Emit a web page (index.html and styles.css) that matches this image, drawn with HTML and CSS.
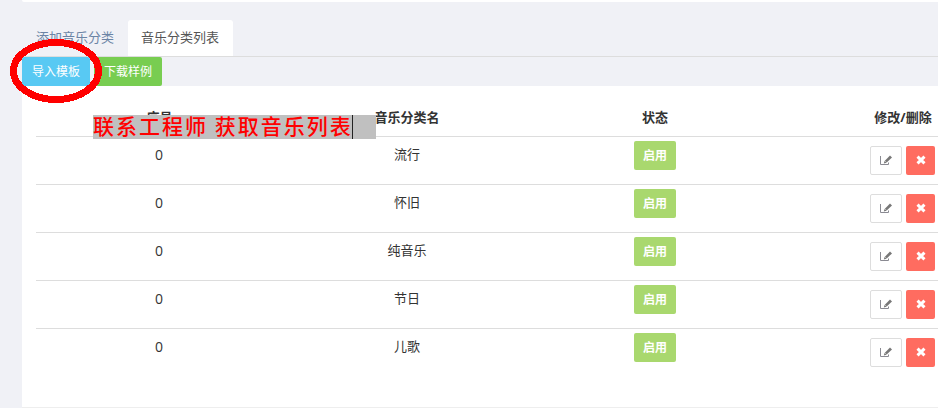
FILE: index.html
```
<!DOCTYPE html>
<html lang="zh-CN">
  <head>
    <meta charset="UTF-8" />
    <title>音乐分类列表</title>
    <link rel="stylesheet" href="styles.css">
  </head>
  <body>
    <svg class="icon-defs" width="0" height="0">
      <symbol id="icon-edit" viewBox="0 0 14 12">
        <path d="M1.5 1v8.5h8V7.5" fill="none" stroke="#8a8a92" />
        <path d="M4.8 8.6l.8-2.6L11 .6 13 2.4 7.4 7.8z" fill="#777" />
        <path d="M6.2 6.2l1.3 1.2" stroke="#fff" stroke-width=".6" />
      </symbol>
      <symbol id="icon-remove" viewBox="0 0 10 10">
        <path d="M1.5 1.7l7 6.6M8.5 1.7l-7 6.6" stroke="#fff" stroke-width="3" />
      </symbol>
    </svg>

    <div class="page">
      <div class="top-panel"></div>
      <ul class="tabs">
        <li class="tab">添加音乐分类</li>
        <li class="tab active">音乐分类列表</li>
      </ul>
      <div class="toolbar">
        <button class="btn btn-info">导入模板</button>
        <button class="btn btn-success">下载样例</button>
      </div>
      <div class="panel">
        <table class="table">
          <thead>
            <tr><th class="col-index">序号</th><th>音乐分类名</th><th>状态</th><th>修改/删除</th></tr>
          </thead>
          <tbody>
            <tr>
              <td class="index">0</td>
              <td>流行</td>
              <td class="status"><button class="btn btn-status">启用</button></td>
              <td class="actions"><div class="action-group"><button class="btn btn-edit"><svg width="14" height="12"><use href="#icon-edit" /></svg></button><button class="btn btn-remove"><svg width="10" height="10"><use href="#icon-remove" /></svg></button></div></td>
            </tr>
            <tr>
              <td class="index">0</td>
              <td>怀旧</td>
              <td class="status"><button class="btn btn-status">启用</button></td>
              <td class="actions"><div class="action-group"><button class="btn btn-edit"><svg width="14" height="12"><use href="#icon-edit" /></svg></button><button class="btn btn-remove"><svg width="10" height="10"><use href="#icon-remove" /></svg></button></div></td>
            </tr>
            <tr>
              <td class="index">0</td>
              <td>纯音乐</td>
              <td class="status"><button class="btn btn-status">启用</button></td>
              <td class="actions"><div class="action-group"><button class="btn btn-edit"><svg width="14" height="12"><use href="#icon-edit" /></svg></button><button class="btn btn-remove"><svg width="10" height="10"><use href="#icon-remove" /></svg></button></div></td>
            </tr>
            <tr>
              <td class="index">0</td>
              <td>节日</td>
              <td class="status"><button class="btn btn-status">启用</button></td>
              <td class="actions"><div class="action-group"><button class="btn btn-edit"><svg width="14" height="12"><use href="#icon-edit" /></svg></button><button class="btn btn-remove"><svg width="10" height="10"><use href="#icon-remove" /></svg></button></div></td>
            </tr>
            <tr>
              <td class="index">0</td>
              <td>儿歌</td>
              <td class="status"><button class="btn btn-status">启用</button></td>
              <td class="actions"><div class="action-group"><button class="btn btn-edit"><svg width="14" height="12"><use href="#icon-edit" /></svg></button><button class="btn btn-remove"><svg width="10" height="10"><use href="#icon-remove" /></svg></button></div></td>
            </tr>
          </tbody>
        </table>
      </div>
    </div>

    <!-- Notes on top of the page -->
    <svg class="circle-mark" width="94" height="66" viewBox="0 0 94 66" shape-rendering="crispEdges">
      <ellipse cx="47" cy="33" rx="42.5" ry="28.5" fill="none" stroke="#f00" stroke-width="7" />
    </svg>
    <div class="note"><span class="note-text">联系工程师 获取音乐列表</span></div>
  </body>
</html>
```
FILE: styles.css
```
* {
  box-sizing: border-box;
}

body {
  margin: 0;
  height: 408px;
  overflow: hidden;
  background: #f0f1f6;
  color: #333;
  font-family: "Open Sans", "Noto Sans CJK SC", sans-serif;
  font-size: 13px;
  line-height: 18px;
}

.icon-defs {
  position: absolute;
}

.page {
  width: 100%;
  padding-left: 22px;
  overflow: hidden;
}

.top-panel {
  height: 2px;
  background: #fff;
  border-radius: 0 0 0 2px;
}

/* Tabs */
.tabs {
  display: flex;
  height: 37px;
  margin: 18px 0 0;
  padding: 0;
  list-style: none;
  border-bottom: 1px solid #ddd;
}

.tab {
  width: 106px;
  padding: 8px 0 10px 14px;
  color: #6b84a5;
  white-space: nowrap;
}

.tab.active {
  width: 105px;
  padding-left: 13px;
  background: #fff;
  border-radius: 3px 3px 0 0;
  color: #555;
}

/* Buttons */
.toolbar {
  display: flex;
  gap: 4px;
  height: 29px;
}

.btn {
  display: flex;
  align-items: center;
  justify-content: center;
  height: 29px;
  padding: 0;
  border: 0;
  border-radius: 2px;
  color: #fff;
  font: 12px/18px "Open Sans", "Noto Sans CJK SC", sans-serif;
}

.btn-info {
  width: 68px;
  background: #58c9f3;
}

.btn-success {
  width: 68px;
  background: #78cd51;
}

.btn-status {
  width: 42px;
  margin: 0 auto;
  background: #a9d86e;
  font-weight: bold;
}

.btn-edit {
  width: 32px;
  border: 1px solid #ddd;
  background: #fff;
}

.btn-remove {
  width: 29px;
  padding-bottom: 1px;
  background: #ff6c60;
}

/* Table */
.panel {
  height: 322px;
  padding: 15px 0 0 14px;
  background: #fff;
  border-bottom: 1px solid #eee;
}

.table {
  width: 991px;
  table-layout: fixed;
  border-collapse: separate;
  border-spacing: 0;
  text-align: center;
}

.table th,
.table td {
  padding: 0;
  vertical-align: top;
  border-bottom: 1px solid #ddd;
}

.table th {
  height: 36px;
  padding-top: 7px;
}

.table .col-index {
  width: 247px;
}

.table td {
  height: 48px;
  padding-top: 8px;
}

.table .index {
  padding: 9px 1px 0 0;
  font-size: 14px;
}

.table .status {
  padding-top: 4px;
}

.table .actions {
  padding: 9px 1px 0 0;
}

.table tbody tr:last-child td {
  border-bottom: 0;
}

.action-group {
  display: flex;
  justify-content: center;
  gap: 4px;
}

/* Notes */
.circle-mark {
  position: absolute;
  left: 9px;
  top: 38px;
}

.note {
  position: absolute;
  left: 93px;
  top: 115px;
  width: 283px;
  height: 24px;
  background: #c0c0c0;
}

.note-text {
  display: block;
  width: 260px;
  height: 24px;
  border-right: 1px solid #222;
  color: #f00;
  font: 500 21px/20px "Noto Sans CJK SC", serif;
  letter-spacing: 2px;
  white-space: nowrap;
}
```
